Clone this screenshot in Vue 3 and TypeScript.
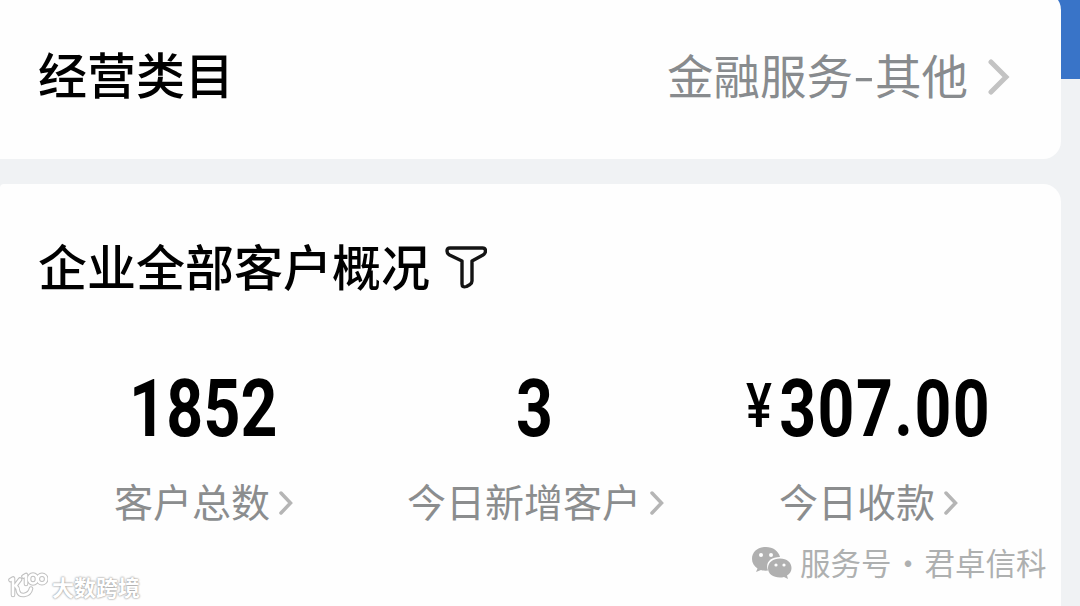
<script setup lang="ts">
interface Stat {
  label: string
  value: string
  currency?: string
  kind: string
}

const stats: Stat[] = [
  { label: '客户总数', value: '1852', kind: 'total' },
  { label: '今日新增客户', value: '3', kind: 'added' },
  { label: '今日收款', value: '307.00', currency: '¥', kind: 'income' },
]
</script>

<template>
  <div class="page">
    <div class="banner"></div>
    <main class="cards">
      <section class="card category">
        <h2 class="title">经营类目</h2>
        <div class="category-value">
          <span>金融服务<span class="dash">-</span>其他</span>
          <svg class="chevron-lg" viewBox="0 0 22 36"><path d="M3 3 L18 18 L3 33" /></svg>
        </div>
      </section>
      <section class="card overview">
        <div class="heading">
          <h2 class="title">企业全部客户概况</h2>
          <svg class="filter" viewBox="0 0 42 43">
            <path d="M5 2 H37.500 Q40.500 2 40.500 5 Q40.500 7.500 38 9 L27 15 V35 Q27 37 25 38.500 L21.500 40.500 Q17 42 17 38 V15 L4.500 9 Q2 7.500 2 5 Q2 2 5 2 Z" />
          </svg>
        </div>
        <div class="stats">
          <div v-for="stat in stats" :key="stat.kind" class="stat" :class="stat.kind">
            <div class="number"><span v-if="stat.currency" class="currency">{{ stat.currency }}</span><span class="digits">{{ stat.value }}</span></div>
            <div class="label">
              <span>{{ stat.label }}</span>
              <svg class="chevron" viewBox="0 0 14 24"><path d="M2 2 L11.500 12 L2 22" /></svg>
            </div>
          </div>
        </div>
      </section>
    </main>
    <div class="account">
      <svg class="wechat" viewBox="0 0 41 34">
        <path class="bubble" d="M15 1 C6.500 1 1 6 1 13 C1 17 3 20 6.500 22.500 L5 26 L10 24 Q13 25 17 24.500 C14 17 19 11 29 11 C27.500 5 22 1 15 1 Z" />
        <path class="bubble" d="M29 12.500 C22 12.500 17 16.500 17 22 C17 28 22 31.500 29 31.500 Q31 31.500 33 31 L37 33 L36 29.500 C39 27.500 40.500 25 40.500 22 C40.500 16.500 36 12.500 29 12.500 Z" />
        <g class="eye"><circle cx="10" cy="9" r="2" /><circle cx="20" cy="9" r="2" /><circle cx="25" cy="19" r="1.600" /><circle cx="33" cy="19" r="1.600" /></g>
      </svg>
      <span>服务号</span><span class="dot">·</span><span>君卓信科</span>
    </div>
    <div class="brand">
      <svg class="brand-mark" viewBox="0 0 40 28">
        <g class="shade"><path d="M2.500 8 L5 6.500 V23 M12 7.500 L7.500 13.500 Q10 16 10 19 Q11 23.500 16 23 Q22 22 23 16.500 M15.500 4.500 L18 3 V12" /><ellipse cx="25" cy="7" rx="4" ry="4.500" /><circle cx="34" cy="7" r="4.200" /></g>
        <g class="line"><path d="M2.500 8 L5 6.500 V23 M12 7.500 L7.500 13.500 Q10 16 10 19 Q11 23.500 16 23 Q22 22 23 16.500 M15.500 4.500 L18 3 V12" /><ellipse cx="25" cy="7" rx="4" ry="4.500" /><circle cx="34" cy="7" r="4.200" /></g>
      </svg>
      <span class="brand-name">大数跨境</span>
    </div>
  </div>
</template>

<style>
body { overflow: hidden; }
</style>

<style scoped>
.page {
  position: relative;
  width: 1080px;
  height: 606px;
  overflow: hidden;
  background: #f0f2f4;
  font-family: "Noto Sans CJK SC", sans-serif;
}
.banner { position: absolute; top: 0; right: 0; width: 60px; height: 79px; background: #3974c8; }
.cards { position: relative; display: flex; flex-direction: column; gap: 25px; width: 1061px; margin-top: -8px; }
.card { background: #fefefe; box-sizing: border-box; }
.category {
  display: flex;
  justify-content: space-between;
  height: 167px;
  padding: 45px 51px 0 38px;
  border-radius: 0 18px 18px 0;
}
.title { margin: 0; font-size: 49px; line-height: 72px; font-weight: 500; color: #000; white-space: nowrap; }
.category-value { display: flex; align-items: flex-start; height: 74px; font-size: 46.500px; line-height: 74px; color: #888b8e; white-space: nowrap; }
.dash { display: inline-block; width: 22px; text-align: center; transform: translateY(-1px) scaleX(1.350); }
.chevron-lg { width: 22px; height: 36px; margin: 22px 0 0 20px; fill: none; stroke: #c3c3c3; stroke-width: 5; stroke-linecap: round; }
.overview { height: 440px; padding-top: 45px; border-radius: 4px 18px 0 0; }
.heading { display: flex; align-items: center; padding-left: 38px; }
.filter { width: 42px; height: 43px; margin: 4px 0 0 15px; fill: none; stroke: #141414; stroke-width: 3.400; stroke-linejoin: round; }
.stats { display: grid; grid-template-columns: 370px 331px 360px; padding-top: 60px; }
.stat { display: flex; flex-direction: column; }
.number { display: flex; align-items: baseline; height: 96px; line-height: 96px; font-family: Roboto, sans-serif; color: #000; transform: scaleX(0.800); transform-origin: left; white-space: nowrap; }
.digits { font-size: 80.500px; font-weight: 700; letter-spacing: 1.800px; }
.currency { font-size: 61px; font-weight: 500; position: relative; top: -9px; margin-right: 9px; }
.label { display: flex; align-items: flex-start; margin-top: 16px; height: 50px; font-size: 39px; line-height: 54px; color: #8b8d8e; white-space: nowrap; }
.chevron { width: 14px; height: 24px; margin: 18px 0 0 9px; fill: none; stroke: #b5b5b5; stroke-width: 3.500; stroke-linecap: round; }
.total .number { margin-left: 129px; }
.total .digits { letter-spacing: 0.300px; }
.total .label { margin-left: 114px; }
.added .number { margin-left: 146px; }
.added .label { margin-left: 37px; }
.income .number { margin-left: 45px; }
.income .label { margin-left: 78px; }
.account { position: absolute; left: 751px; top: 543px; display: flex; align-items: center; height: 40px; font-size: 30.500px; line-height: 36px; color: #aeb0b0; white-space: nowrap; }
.account span { position: relative; top: -1px; }
.wechat { width: 41px; height: 34px; margin-right: 8px; }
.bubble { fill: #b0b0b0; }
.eye { fill: #fefefe; }
.dot { width: 33px; text-align: center; }
.brand { position: absolute; left: 8px; top: 570px; display: flex; align-items: center; height: 32px; }
.brand-mark { width: 40px; height: 28px; margin-right: 4px; fill: none; stroke-linecap: round; stroke-linejoin: round; }
.shade { stroke: #c0c0c0; stroke-width: 4.600; }
.line { stroke: #fff; stroke-width: 2.600; }
.brand-name { font-size: 22px; font-weight: 700; line-height: 30px; color: #fff; text-shadow: 0 0 2px #999, 0 0 2px #aaa; }
</style>
